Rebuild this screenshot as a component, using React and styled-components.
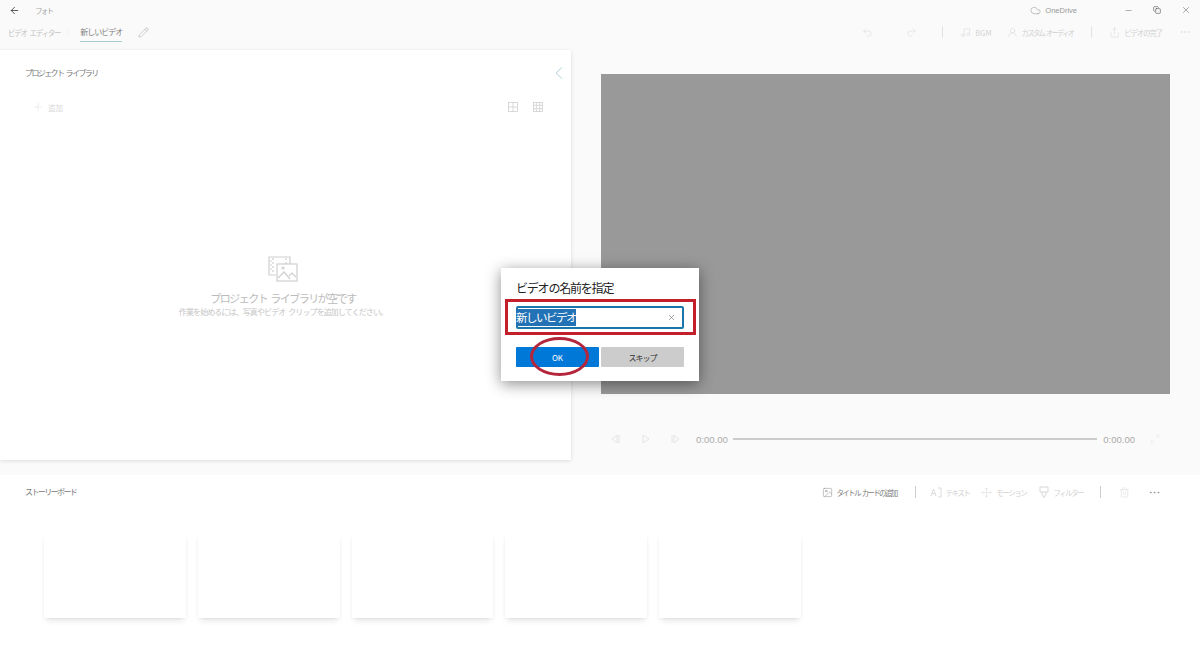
import React from 'react';
import styled, { createGlobalStyle } from 'styled-components';
import { ArrowLeft, ChevronRight, ChevronLeft, Pencil, Undo2, Redo2, Music, UserRound, Share, Plus, Minus, X, Copy, Cloud, Image as ImageIcon, MoreHorizontal, Trash2, Move, Maximize2 } from 'lucide-react';

const Global = createGlobalStyle`
  html, body { margin: 0; padding: 0; background: #fff; }
  body { font-family: "Noto Sans CJK JP", "Noto Sans", sans-serif; overflow: hidden; }
`;
const Page = styled.div`
  position: relative; width: 1200px; height: 650px; display: flex; flex-direction: column; overflow: hidden; background: #fff;
`;
const Header = styled.header`
  height: 50px; background: #fafafa; display: flex; flex-direction: column; flex: none;
`;
const TitleRow = styled.div`
  height: 20px; display: flex; align-items: center; padding-left: 9px;
`;
const BackButton = styled.span`
  display: flex; color: #222; width: 26px;
`;
const AppName = styled.span`
  color: #aaa; font-size: 7.5px; letter-spacing: -1.8px;
`;
const TitleSpacer = styled.div`flex: 1;`;
const OneDrive = styled.span`
  display: flex; align-items: center; gap: 4px; color: #999; font-family: "Liberation Sans", sans-serif; font-size: 7.5px; margin-right: 47px;
`;
const WinButtons = styled.div`
  display: flex; align-items: center; gap: 20px; color: #333; margin-right: 9px;
`;
const CommandRow = styled.div`
  height: 30px; display: flex; align-items: center; padding: 0 9px 6px 8px; box-sizing: border-box;
`;
const Crumb = styled.span`
  font-size: 7.5px; letter-spacing: -1.2px; word-spacing: 2px; color: #c4c4c4; white-space: nowrap;
`;
const CrumbActive = styled.span`
  font-size: 8px; letter-spacing: -1px; color: #808080; white-space: nowrap; height: 18px; line-height: 18px; margin: 1px 16px 0 0;
  border-bottom: 1px solid #a9cbd3; display: block;
`;
const CrumbChevron = styled.span`
  display: flex; color: #ddd; margin: 0 7px 0 3px;
`;
const PencilIcon = styled.span`display: flex; color: #999;`;
const Commands = styled.div`
  margin-left: auto; display: flex; align-items: center; color: #d2d2d2;
`;
const Command = styled.span`
  display: flex; align-items: center; gap: 4px; white-space: nowrap; margin-left: ${p => p.$ml || 0}px;
  color: ${p => p.$dark ? '#808080' : '#d2d2d2'};
  font-size: 7.5px;
  letter-spacing: ${p => p.$ls ?? -1.5}px;
  word-spacing: 2px;
`;
const Divider = styled.span`
  display: block; width: 1px; height: 12px; background: ${p => p.$light ? '#e2e2e2' : '#cfcfcf'}; margin-left: ${p => p.$ml || 0}px;
`;
const Main = styled.main`
  height: 425px; flex: none; background: #fafafa; display: flex;
`;
const Library = styled.section`
  width: 571px; height: 410px; background: #fff; box-shadow: 0 1px 4px rgba(0,0,0,.12); display: flex; flex-direction: column; flex: none;
`;
const LibraryHead = styled.div`
  display: flex; align-items: center; justify-content: space-between; height: 46px; padding: 0 1px 0 25px;
`;
const SectionTitle = styled.h2`
  margin: -2px 0 0; font-size: 8px; letter-spacing: -1.6px; word-spacing: 2px; font-weight: 400; color: #777;
`;
const Collapse = styled.span`display: flex; color: #a9cbd3;`;
const LibraryTools = styled.div`
  height: 22px; display: flex; align-items: center; padding: 0 28px 0 32px; color: #d8d8d8; font-size: 7.5px; gap: 4px;
`;
const ViewGroup = styled.div`
  margin-left: auto; display: flex; gap: 15px; color: #d0d0d0;
`;
const EmptyState = styled.div`
  flex: 1; display: flex; flex-direction: column; align-items: center; padding: 138px 5px 0 0; color: #c0c0c0;
`;
const EmptyTitle = styled.div`
  font-size: 11px; letter-spacing: -1.5px; word-spacing: 2px; color: #bbb; line-height: 16px; margin-top: 7px;
`;
const EmptySub = styled.div`
  font-size: 8px; letter-spacing: -.9px; word-spacing: 2px; color: #c6c6c6; line-height: 11px;
`;
const PreviewPane = styled.section`
  flex: 1; display: flex; flex-direction: column; padding: 24px 30px 0;
`;
const Screen = styled.div`
  width: 569px; height: 320px; background: #999;
`;
const Controls = styled.div`
  display: flex; align-items: center; margin-top: 35px; height: 20px; padding: 0 10px; color: #e2e2e2; gap: 21px;
`;
const Time = styled.span`
  font-family: "Liberation Sans", sans-serif; font-size: 9.5px; color: #aaa; margin-left: ${p => p.$ml || 0}px;
`;
const Track = styled.div`
  flex: 1; height: 2px; background: #ccc; margin: 0 -15px 0 -16px;
`;
const Expand = styled.span`
  display: flex; margin-left: -6px;
`;
const Board = styled.section`
  flex: 1; display: flex; flex-direction: column; background: #fff;
`;
const BoardHead = styled.div`
  height: 34px; display: flex; align-items: center; padding: 0 39px 0 25px;
`;
const BoardTools = styled.div`
  margin-left: auto; display: flex; align-items: center;
`;
const Cards = styled.div`
  display: flex; gap: 12px; padding: 24px 0 0 44px;
`;
const Card = styled.div`
  width: 141.75px; height: 85px; background: #fff; box-shadow: 0 5px 6px -2px rgba(0,0,0,.09), 2px 2px 3px -2px rgba(0,0,0,.06), -2px 2px 3px -2px rgba(0,0,0,.05);
`;
const Dialog = styled.div`
  position: absolute; left: 501px; top: 268px; width: 198px; height: 113px; box-sizing: border-box; background: #fff;
  box-shadow: 0 3px 14px rgba(0,0,0,.45); padding: 12px 15px 0; display: flex; flex-direction: column;
`;
const DialogTitle = styled.div`
  font-size: 12px; letter-spacing: -1.2px; color: #222; line-height: 16px;
`;
const NameField = styled.div`
  margin-top: 10px; height: 23px; box-sizing: border-box; border: 2px solid #1a76aa; border-radius: 2px; display: flex; align-items: center; padding-right: 6px;
`;
const Selected = styled.span`
  background: #2472b6; color: #fff; font-size: 11.5px; letter-spacing: -1.5px; line-height: 17px; white-space: nowrap; margin-left: -2px;
`;
const Clear = styled.span`margin-left: auto; display: flex; color: #444;`;
const DialogButtons = styled.div`
  display: flex; gap: 2px; margin-top: 18px;
`;
const DialogButton = styled.button`
  flex: 1; height: 20px; border: 0; padding: 0; border-radius: 1px; font-family: inherit; font-size: 8px; letter-spacing: ${p => p.$primary ? 0 : -1}px;
  background: ${p => p.$primary ? '#0078d7' : '#ccc'}; color: ${p => p.$primary ? '#fff' : '#333'};
`;
const RedRect = styled.div`
  position: absolute; left: 505px; top: 299px; width: 191px; height: 36px; box-sizing: border-box; border: 3px solid #c3202c; pointer-events: none;
`;
const RedOval = styled.div`
  position: absolute; left: 530px; top: 337px; width: 59px; height: 39px; box-sizing: border-box; border: 3px solid #b3263c; border-radius: 50%; pointer-events: none;
`;

const GridIcon = ({ n }) => (
  <svg width="10" height="10" viewBox="0 0 10 10" fill="none" stroke="currentColor" strokeWidth=".8">
    <rect x=".5" y=".5" width="9" height="9" />
    {Array.from({ length: n - 1 }, (_, i) => {
      const p = ((i + 1) * 10) / n;
      return <g key={i}><path d={`M${p} 0V10`} /><path d={`M0 ${p}H10`} /></g>;
    })}
  </svg>
);
const MediaIcon = () => (
  <svg width="31" height="27" viewBox="0 0 31 27" fill="none" stroke="#cfcfcf" strokeWidth="1.2">
    <path d="M8 19H1V1H22V8" />
    <path d="M5 2V18M18 2V8M2 5H4M2 9H4M2 13H4" strokeDasharray="2 2" />
    <rect x="9" y="8" width="20" height="17" />
    <path d="M10 22l6-6 6 7M21 20l3-3 4 4" />
    <circle cx="15" cy="12" r="1" />
  </svg>
);
const TextIcon = () => (
  <svg width="12" height="11" viewBox="0 0 12 11" fill="none" stroke="currentColor" strokeWidth=".8">
    <path d="M1 9L3.500 2 6 9M2 6.500H5M8 1H11V10H8" />
  </svg>
);
const FilterIcon = () => (
  <svg width="10" height="12" viewBox="0 0 10 12" fill="none" stroke="currentColor" strokeWidth=".9">
    <path d="M1 1H9V6H1ZM3 6V8L5 11.500 7 8V6" />
  </svg>
);
const PlayerIcon = ({ kind }) => (
  <svg width="9" height="10" viewBox="0 0 9 10" fill="none" stroke="currentColor" strokeWidth=".9">
    {kind === 'back' && <path d="M6 1L1 5 6 9ZM8 1V9" />}
    {kind === 'play' && <path d="M2 1L8 5 2 9Z" />}
    {kind === 'forward' && <path d="M3 1L8 5 3 9ZM1 1V9" />}
  </svg>
);
const thin = { strokeWidth: 1 };

export default function App() {
  return (
    <Page>
      <Global />
      <Header>
        <TitleRow>
          <BackButton><ArrowLeft size={11} strokeWidth={1.6} /></BackButton>
          <AppName>フォト</AppName>
          <TitleSpacer />
          <OneDrive><Cloud size={11} strokeWidth={1.2} />OneDrive</OneDrive>
          <WinButtons>
            <Minus size={9} {...thin} />
            <Copy size={8} strokeWidth={1.5} />
            <X size={10} {...thin} />
          </WinButtons>
        </TitleRow>
        <CommandRow>
          <Crumb>ビデオ エディター</Crumb>
          <CrumbChevron><ChevronRight size={10} {...thin} /></CrumbChevron>
          <CrumbActive>新しいビデオ</CrumbActive>
          <PencilIcon><Pencil size={11} {...thin} /></PencilIcon>
          <Commands>
            <Undo2 size={11} {...thin} />
            <Command $ml={33}><Redo2 size={11} {...thin} /></Command>
            <Divider $ml={25} $light />
            <Command $ml={17} $ls={0}><Music size={11} {...thin} />BGM</Command>
            <Command $ml={15} $ls={-1.9}><UserRound size={11} {...thin} />カスタム オーディオ</Command>
            <Divider $ml={18} $light />
            <Command $ml={17} $ls={-1.2}><Share size={11} {...thin} />ビデオの完了</Command>
            <Command $ml={17}><MoreHorizontal size={12} {...thin} /></Command>
          </Commands>
        </CommandRow>
      </Header>
      <Main>
        <Library>
          <LibraryHead>
            <SectionTitle>プロジェクト ライブラリ</SectionTitle>
            <Collapse><ChevronLeft size={22} {...thin} /></Collapse>
          </LibraryHead>
          <LibraryTools>
            <Plus size={12} {...thin} />
            <span>追加</span>
            <ViewGroup><GridIcon n={2} /><GridIcon n={3} /></ViewGroup>
          </LibraryTools>
          <EmptyState>
            <MediaIcon />
            <EmptyTitle>プロジェクト ライブラリが空です</EmptyTitle>
            <EmptySub>作業を始めるには、写真やビデオ クリップを追加してください。</EmptySub>
          </EmptyState>
        </Library>
        <PreviewPane>
          <Screen />
          <Controls>
            <PlayerIcon kind="back" />
            <PlayerIcon kind="play" />
            <PlayerIcon kind="forward" />
            <Time $ml={-5}>0:00.00</Time>
            <Track />
            <Time>0:00.00</Time>
            <Expand><Maximize2 size={10} {...thin} /></Expand>
          </Controls>
        </PreviewPane>
      </Main>
      <Board>
        <BoardHead>
          <SectionTitle>ストーリーボード</SectionTitle>
          <BoardTools>
            <Command $dark $ls={-1.7}><ImageIcon size={11} {...thin} />タイトル カードの追加</Command>
            <Divider $ml={18} />
            <Command $ml={14}><TextIcon />テキスト</Command>
            <Command $ml={12}><Move size={11} {...thin} />モーション</Command>
            <Command $ml={13}><FilterIcon />フィルター</Command>
            <Divider $ml={17} />
            <Command $ml={18}><Trash2 size={11} {...thin} /></Command>
            <Command $ml={18} $dark><MoreHorizontal size={13} {...thin} /></Command>
          </BoardTools>
        </BoardHead>
        <Cards>
          <Card /><Card /><Card /><Card /><Card />
        </Cards>
      </Board>
      <Dialog>
        <DialogTitle>ビデオの名前を指定</DialogTitle>
        <NameField>
          <Selected>新しいビデオ</Selected>
          <Clear><X size={9} strokeWidth={1.2} /></Clear>
        </NameField>
        <DialogButtons>
          <DialogButton $primary>OK</DialogButton>
          <DialogButton>スキップ</DialogButton>
        </DialogButtons>
      </Dialog>
      <RedRect />
      <RedOval />
    </Page>
  );
}
